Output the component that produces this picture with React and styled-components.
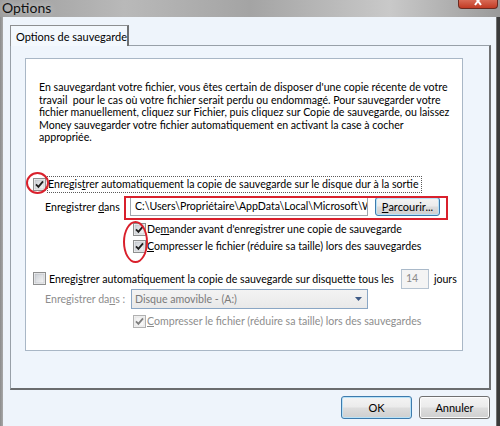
import React from "react";
import styled, { createGlobalStyle } from "styled-components";

const Global = createGlobalStyle`
  html, body { margin: 0; padding: 0; }
  body { width: 500px; height: 426px; overflow: hidden; background: #eef4fb; }
  * { box-sizing: border-box; }
`;

const FONT = `"Lato", "Liberation Sans", sans-serif`;

const Window = styled.div`
  width: 500px;
  height: 426px;
  display: flex;
  flex-direction: column;
  background: linear-gradient(to right, #8c8c8c 0px, #a8a8a8 3px, #a8a8a8 496px, #3a3a3a 497px);
  font-family: ${FONT};
  font-size: 10.6px;
  color: #000;
  position: relative;
  overflow: hidden;
`;

const TitleBar = styled.div`
  height: 17px;
  flex: none;
  display: flex;
  align-items: center;
  padding-left: 2px;
  position: relative;
  background: linear-gradient(to right, #9d9d9d 0%, #b9b9b9 25%, #a4a4a4 50%, #c9c9c9 78%, #9a9a9a 100%);
`;

const Title = styled.span`
  font-size: 14px;
  line-height: 15px;
  margin-top: -3px;
  color: #111;
  text-shadow: 0 0 6px rgba(255,255,255,0.6);
`;

const CloseBtn = styled.div`
  position: absolute;
  left: 458px;
  top: 0;
  width: 40px;
  height: 9px;
  border-radius: 0 0 4px 4px;
  border: 1px solid #6b2a20;
  border-top: none;
  background: linear-gradient(#d86a55, #c13b24);
  display: flex;
  justify-content: center;
`;

const CloseGlyph = styled.svg`
  display: block;
`;

const Client = styled.div`
  flex: 1;
  margin: 0 4px 0 3px;
  background: #eef4fb;
  display: flex;
  flex-direction: column;
  padding: 8px 0 0 7px;
`;

const TabStrip = styled.div`
  display: flex;
  height: 20px;
  flex: none;
`;

const Tab = styled.div`
  width: 119px;
  height: 21px;
  border: 1px solid #8d8f91;
  border-right: 2px solid #6f7173;
  border-bottom: none;
  background: #f3f8fd;
  padding: 3px 0 0 5px;
  font-size: 11px;
  line-height: 15px;
  white-space: nowrap;
  position: relative;
  z-index: 1;
`;

const Panel = styled.div`
  width: 481px;
  height: 345px;
  flex: none;
  border: 1px solid #98a0a8;
  border-right: 2px solid #6f7173;
  border-bottom: 2px solid #6a6c6e;
  background: #eff5fc;
  padding: 12px 0 0 14px;
`;

const Box = styled.div`
  width: 438px;
  height: 293px;
  background: #fff;
  border: 1px solid #a9b7c6;
  padding: 22px 0 0 7px;
  display: flex;
  flex-direction: column;
  position: relative;
`;

const Para = styled.p`
  margin: 0 0 0 6px;
  line-height: 12.6px;
  white-space: pre;
`;

const Row = styled.div`
  display: flex;
  align-items: center;
  height: ${p => p.$h || 17}px;
  margin-top: ${p => p.$mt || 0}px;
  padding-left: ${p => p.$indent || 0}px;
  color: ${p => (p.$disabled ? "#8d8d8d" : "#000")};
  white-space: nowrap;
`;

const Focus = styled.span`
  border: 1px dotted #5a5a5a;
  padding: 0 2px 1px 0;
  line-height: 14px;
`;

const Label = styled.span`
  margin-left: ${p => p.$ml || 0}px;
  margin-right: ${p => p.$mr || 0}px;
  ${p => (p.$w ? `width: ${p.$w}px; flex: none;` : "")}
`;

const U = styled.u`
  text-decoration: underline;
  text-underline-offset: 1px;
`;

const CbWrap = styled.span`
  width: 13px;
  height: 13px;
  flex: none;
  margin-right: 1px;
  display: inline-flex;
`;

const TextBox = styled.div`
  width: ${p => p.$w}px;
  height: ${p => p.$h || 19}px;
  flex: none;
  border: 1px solid ${p => (p.$disabled ? "#b5c3d1" : "#a0a6ae")};
  border-top-color: ${p => (p.$disabled ? "#a9b9c9" : "#7b818a")};
  background: ${p => (p.$disabled ? "#f4f4f4" : "#fff")};
  color: ${p => (p.$disabled ? "#8a8a8a" : "#000")};
  padding: 0 0 0 4px;
  line-height: 17px;
  overflow: hidden;
  white-space: nowrap;
`;

const Select = styled.div`
  width: 237px;
  height: 20px;
  flex: none;
  border: 1px solid #8aa6c4;
  background: linear-gradient(#f3f3f3, #e9e9e9);
  color: #7a7a7a;
  padding-left: 3px;
  display: flex;
  align-items: center;
  justify-content: space-between;
`;

const Button = styled.div`
  width: ${p => p.$w}px;
  height: ${p => p.$h}px;
  flex: none;
  border: 1px solid ${p => (p.$default ? "#3d7bad" : "#707070")};
  border-radius: 3px;
  box-shadow: inset 0 0 0 1px ${p => (p.$default ? "#b8e2f8" : "#fcfcfc")};
  background: linear-gradient(#f4f4f4 0%, #ebebeb 48%, #dddddd 52%, #cfcfcf 100%);
  display: flex;
  align-items: center;
  justify-content: center;
  margin-left: ${p => p.$ml || 0}px;
  font-size: 11px;
`;

const Footer = styled.div`
  display: flex;
  justify-content: flex-end;
  padding: 6px 1px 0 0;
  width: 481px;
`;

const Annotation = styled.div`
  position: absolute;
  left: ${p => p.$x}px;
  top: ${p => p.$y}px;
  width: ${p => p.$w}px;
  height: ${p => p.$h}px;
  border: 2px solid #d9202c;
  border-radius: ${p => (p.$ellipse ? "50%" : "0")};
  pointer-events: none;
`;

function Check({ checked, disabled }) {
  const border = disabled ? "#b1b1b1" : "#8e8f8f";
  const mark = disabled ? "#7e7e7e" : "#1e1e1e";
  const id = disabled ? "gd" : "gn";
  return (
    <CbWrap>
      <svg width="13" height="13" viewBox="0 0 13 13">
        <defs>
          <linearGradient id={id} x1="0" y1="0" x2="1" y2="1">
            <stop offset="0" stopColor={disabled ? "#f0f0f0" : "#cbcfd5"} />
            <stop offset="1" stopColor={disabled ? "#fafafa" : "#f6f6f6"} />
          </linearGradient>
        </defs>
        <rect x="0.5" y="0.5" width="12" height="12" fill="#f4f4f4" stroke={border} />
        <rect x="2" y="2" width="9" height="9" fill={`url(#${id})`} stroke={disabled ? "#dcdcdc" : "#b9bdc2"} strokeWidth="0.6" />
        {checked && (
          <path d="M3 6.3 L5.4 8.8 L10 3.3" fill="none" stroke={mark} strokeWidth="1.8" />
        )}
      </svg>
    </CbWrap>
  );
}

const Arrow = () => (
  <svg width="17" height="18" viewBox="0 0 17 18">
    <path d="M5 7 L12 7 L8.5 11 Z" fill="#3e5a86" />
  </svg>
);

export default function App() {
  return (
    <>
      <Global />
      <Window>
        <TitleBar>
          <Title>Options</Title>
          <CloseBtn>
            <CloseGlyph width="10" height="8" viewBox="0 0 10 8">
              <path d="M2 -3 L8 5 M8 -3 L2 5" stroke="#fff" strokeWidth="2" />
            </CloseGlyph>
          </CloseBtn>
        </TitleBar>
        <Client>
          <TabStrip>
            <Tab>Options de sauvegarde</Tab>
          </TabStrip>
          <Panel>
            <Box>
              <Para>
                {"En sauvegardant votre fichier, vous êtes certain de disposer d'une copie récente de votre\ntravail  pour le cas où votre fichier serait perdu ou endommagé. Pour sauvegarder votre\nfichier manuellement, cliquez sur Fichier, puis cliquez sur Copie de sauvegarde, ou laissez\nMoney sauvegarder votre fichier automatiquement en activant la case à cocher\nappropriée."}
              </Para>
              <Row $mt={32} $h={17}>
                <Check checked />
                <Focus>
                  Enregis<U>t</U>rer automatiquement la copie de sauvegarde sur le disque dur à la sortie
                </Focus>
              </Row>
              <Row $mt={2} $h={24} $indent={12}>
                <Label $w={85}>Enregistrer <U>d</U>ans</Label>
                <TextBox $w={238}>C:\Users\Propriétaire\AppData\Local\Microsoft\Wi</TextBox>
                <Button $default $w={65} $h={19} $ml={7}><U>P</U>arcourir...</Button>
              </Row>
              <Row $mt={2} $indent={100}>
                <Check checked />
                <Label>De<U>m</U>ander avant d'enregistrer une copie de sauvegarde</Label>
              </Row>
              <Row $indent={100}>
                <Check checked />
                <Label><U>C</U>ompresser le fichier (réduire sa taille) lors des sauvegardes</Label>
              </Row>
              <Row $mt={14} $h={20}>
                <Check />
                <Label $ml={2} $mr={7}>Enregi<U>s</U>trer automatiquement la copie de sauvegarde sur disquette tous les</Label>
                <TextBox $disabled $w={28} $h={20}>14</TextBox>
                <Label $ml={5}>jours</Label>
              </Row>
              <Row $h={20} $indent={12} $disabled>
                <Label $w={86}>Enregistrer da<U>n</U>s :</Label>
                <Select>
                  <span>Disque amovible -  (A:)</span>
                  <Arrow />
                </Select>
              </Row>
              <Row $mt={4} $indent={100} $disabled>
                <Check checked disabled />
                <Label><U>C</U>ompresser le fichier (réduire sa taille) lors des sauvegardes</Label>
              </Row>
              <Annotation $ellipse $x={0} $y={113} $w={23} $h={22} />
              <Annotation $x={98} $y={137} $w={324} $h={24} />
              <Annotation $ellipse $x={97} $y={162} $w={25} $h={42} />
            </Box>
          </Panel>
          <Footer>
            <Button $default $w={71} $h={23}>OK</Button>
            <Button $w={71} $h={23} $ml={7}>Annuler</Button>
          </Footer>
        </Client>
      </Window>
    </>
  );
}
